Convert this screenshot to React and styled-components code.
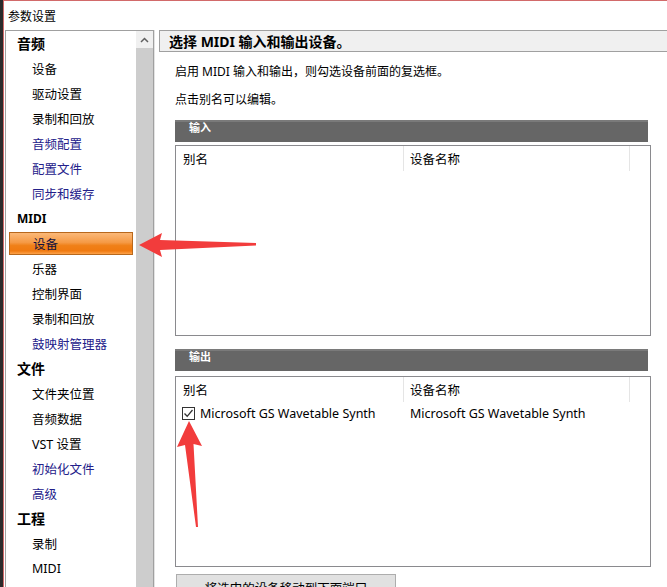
import React from "react";
import styled, { createGlobalStyle } from "styled-components";

const Global = createGlobalStyle`
  html, body { margin: 0; padding: 0; background: #2b2b2b; overflow: hidden; }
  #root { width: 667px; height: 587px; }
  * { box-sizing: border-box; }
`;

const FONT = `"Noto Sans", "Noto Sans CJK SC", sans-serif`;

const Window = styled.div`
  position: relative;
  margin-left: 3px;
  width: 664px;
  height: 587px;
  background: #fff;
  border-top: 1px solid #d26a6a;
  border-left: 1px solid #d26a6a;
  font-family: ${FONT};
  color: #000;
  overflow: hidden;
  display: flex;
  flex-direction: column;
`;

const TitleBar = styled.div`
  height: 29px;
  padding-left: 4px;
  display: flex;
  align-items: center;
  font-size: 12px;
`;

const Main = styled.div`
  flex: 1;
  display: flex;
  min-height: 0;
`;

const NavPanel = styled.div`
  margin-left: 1px;
  width: 149px;
  border: 1px solid #a0a0a0;
  border-bottom: none;
  display: flex;
  background: #fff;
`;

const NavList = styled.div`
  flex: 1;
  display: flex;
  flex-direction: column;
`;

const NavHeader = styled.div`
  height: 25px;
  display: flex;
  align-items: center;
  padding-left: 11px;
  padding-bottom: 1px;
  font-size: ${(p) => (p.$latin ? "12px" : "14px")};
  font-weight: 700;
`;

const NavItem = styled.div`
  height: 25px;
  display: flex;
  align-items: center;
  padding-left: ${(p) => (p.$active ? "23px" : "26px")};
  font-size: 12.5px;
  color: ${(p) => (p.$link ? "#23208a" : "#000")};
  ${(p) =>
    p.$active &&
    `
    margin: 1px 3px 1px 3px;
    height: 23px;
    border: 1px solid #b8681c;
    color: #101040;
    background: linear-gradient(#fbb878 0%, #f59a45 45%, #f08018 60%, #f07a10 85%, #fda24a 100%);
  `}
`;

const Scrollbar = styled.div`
  width: 17px;
  background: #cdcdcd;
  display: flex;
  flex-direction: column;
`;

const ScrollBtn = styled.div`
  height: 17px;
  background: #f0f0f0;
  display: flex;
  align-items: center;
  justify-content: center;
`;

const Divider = styled.div`
  width: 5px;
  border-left: 1px solid #e3e3e3;
`;

const Content = styled.div`
  flex: 1;
  display: flex;
  flex-direction: column;
`;

const PageTitle = styled.div`
  height: 25px;
  background: #f0f0f0;
  border: 1px solid #a0a0a0;
  border-right: none;
  display: flex;
  align-items: center;
  padding-left: 9px;
  font-size: 14px;
  font-weight: 700;
`;

const Body = styled.div`
  padding: 5px 0 0 16px;
  display: flex;
  flex-direction: column;
`;

const Para = styled.div`
  height: 28px;
  display: flex;
  align-items: center;
  font-size: 12px;
`;

const SectionBar = styled.div`
  margin-top: ${(p) => p.$top};
  width: 473px;
  height: 22px;
  background: #666;
  border-top: 2px solid #7a7a7a;
  color: #fff;
  font-size: 11px;
  font-weight: 700;
  padding: 0 0 0 14px;
  line-height: 12px;
`;

const Table = styled.div`
  margin-top: ${(p) => p.$top};
  width: 476px;
  height: ${(p) => p.$h};
  border: 1px solid #8a8a8e;
  display: flex;
  flex-direction: column;
`;

const Row = styled.div`
  display: grid;
  grid-template-columns: 228px 226px 1fr;
  height: ${(p) => (p.$head ? "25px" : "22px")};
  font-size: 12.5px;
`;

const Cell = styled.div`
  display: flex;
  align-items: center;
  gap: 5px;
  padding-left: ${(p) => (p.$first ? "7px" : "6px")};
  border-right: ${(p) => (p.$sep ? "1px solid #e5e5e5" : "none")};
`;

const Check = styled.span`
  width: 13px;
  height: 13px;
  border: 1px solid #333;
  background: #fff;
  display: inline-flex;
  align-items: center;
  justify-content: center;
`;

const Button = styled.div`
  margin-top: 7px;
  margin-left: 1px;
  width: 220px;
  height: 30px;
  background: #e1e1e1;
  border: 1px solid #adadad;
  font-size: 12.5px;
  padding-top: 3px;
  text-align: center;
`;

const Overlay = styled.svg`
  position: absolute;
  left: -4px;
  top: -1px;
  pointer-events: none;
`;

const nav = [
  { h: "音频" },
  { t: "设备" },
  { t: "驱动设置" },
  { t: "录制和回放" },
  { t: "音频配置", link: true },
  { t: "配置文件", link: true },
  { t: "同步和缓存", link: true },
  { h: "MIDI", latin: true },
  { t: "设备", active: true },
  { t: "乐器" },
  { t: "控制界面" },
  { t: "录制和回放" },
  { t: "鼓映射管理器", link: true },
  { h: "文件" },
  { t: "文件夹位置" },
  { t: "音频数据" },
  { t: "VST 设置" },
  { t: "初始化文件", link: true },
  { t: "高级", link: true },
  { h: "工程" },
  { t: "录制" },
  { t: "MIDI" },
];

export default function App() {
  return (
    <>
      <Global />
      <Window>
        <TitleBar>参数设置</TitleBar>
        <Main>
          <NavPanel>
            <NavList>
              {nav.map((n, i) =>
                n.h ? (
                  <NavHeader key={i} $latin={n.latin}>{n.h}</NavHeader>
                ) : (
                  <NavItem key={i} $link={n.link} $active={n.active}>{n.t}</NavItem>
                )
              )}
            </NavList>
            <Scrollbar>
              <ScrollBtn>
                <svg width="9" height="6" viewBox="0 0 9 6">
                  <path d="M1 5 L4.5 1.5 L8 5" fill="none" stroke="#606060" strokeWidth="1.5" />
                </svg>
              </ScrollBtn>
            </Scrollbar>
          </NavPanel>
          <Divider />
          <Content>
            <PageTitle>选择 MIDI 输入和输出设备。</PageTitle>
            <Body>
              <Para>启用 MIDI 输入和输出，则勾选设备前面的复选框。</Para>
              <Para>点击别名可以编辑。</Para>
              <SectionBar $top="7px">输入</SectionBar>
              <Table $top="3px" $h="191px">
                <Row $head>
                  <Cell $first $sep>别名</Cell>
                  <Cell $sep>设备名称</Cell>
                  <Cell />
                </Row>
              </Table>
              <SectionBar $top="13px">输出</SectionBar>
              <Table $top="5px" $h="191px">
                <Row $head>
                  <Cell $first $sep>别名</Cell>
                  <Cell $sep>设备名称</Cell>
                  <Cell />
                </Row>
                <Row>
                  <Cell>
                    <Check>
                      <svg width="11" height="11" viewBox="0 0 11 11">
                        <path d="M1.5 5.5 L4.2 8.3 L9.5 2" fill="none" stroke="#333" strokeWidth="1.3" />
                      </svg>
                    </Check>
                    Microsoft GS Wavetable Synth
                  </Cell>
                  <Cell>Microsoft GS Wavetable Synth</Cell>
                  <Cell />
                </Row>
              </Table>
              <Button>将选中的设备移动到下面端口</Button>
            </Body>
          </Content>
        </Main>
        <Overlay width="667" height="587" viewBox="0 0 667 587">
          <polygon
            points="139,245 162,233 160,240 256,243 256,245.5 160,250 162,257"
            fill="#f23c3c"
          />
          <polygon
            points="189,421 202,446 193.5,444 198,527 196,527 185,445 177,447"
            fill="#f23c3c"
          />
        </Overlay>
      </Window>
    </>
  );
}
